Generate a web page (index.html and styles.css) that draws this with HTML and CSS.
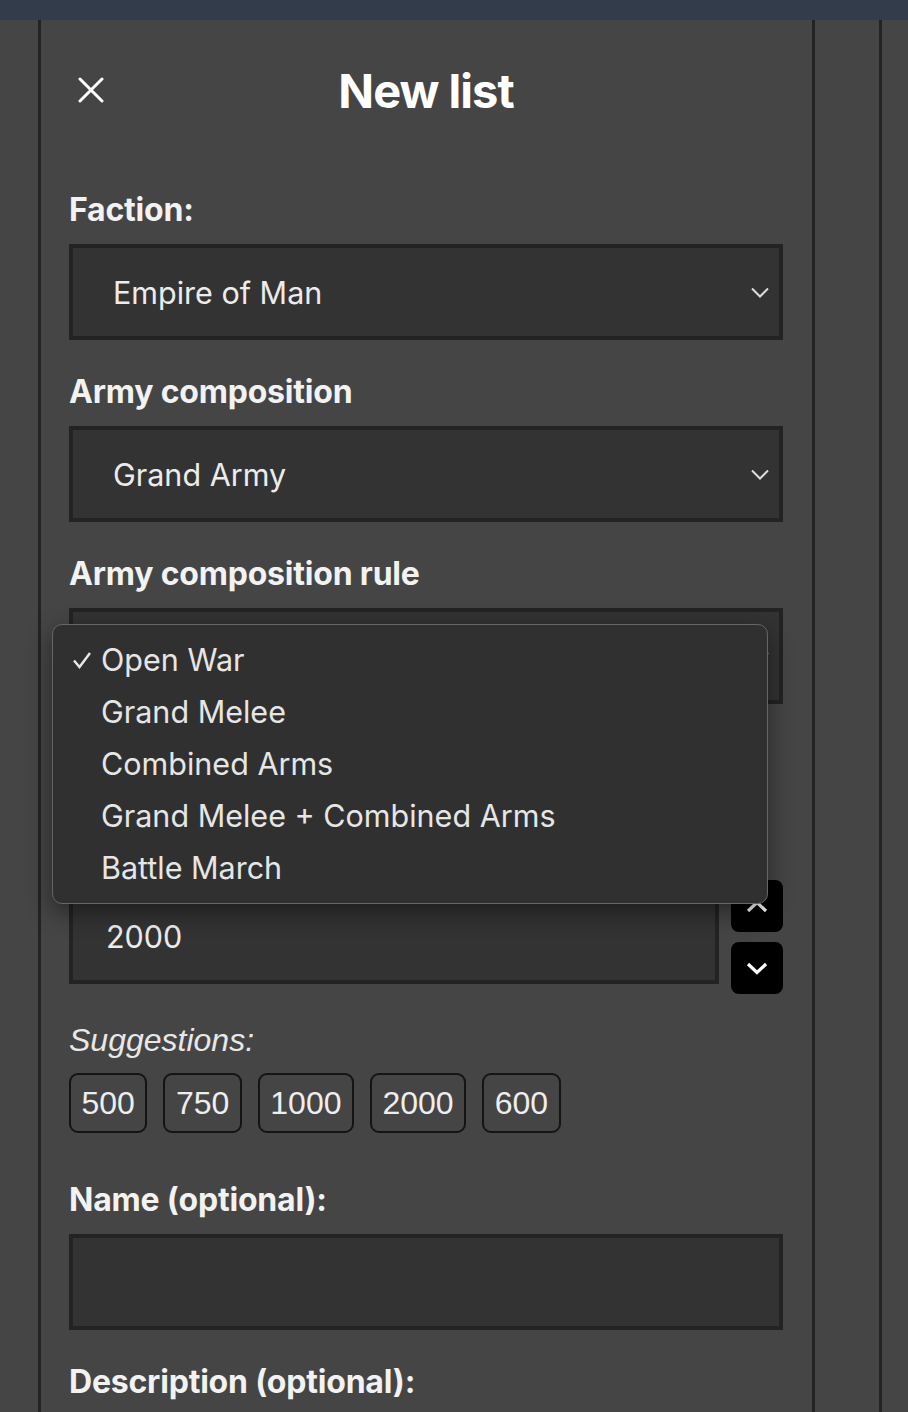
FILE: index.html
```html
<!DOCTYPE html>
<html>
<head>
    <title>New list</title>
    <link rel="stylesheet" href="styles.css">
</head>
<body>
    <div class="topbar"></div>
    <div class="layout">
        <div class="gutter"></div>
        <main class="panel">
            <div class="header">
                <button class="close-button" aria-label="Close">
                    <svg width="26" height="26" viewBox="0 0 26 26"><path d="M2 2 L24 24 M24 2 L2 24" stroke="#fff" stroke-width="3" stroke-linecap="round"/></svg>
                </button>
                <h1 class="title">New list</h1>
                <div></div>
            </div>

            <div class="field">
                <label class="label">Faction:</label>
                <div class="select">
                    <span>Empire of Man</span>
                    <svg class="chevron" width="18" height="11" viewBox="0 0 18 11"><path d="M1 1.5 L9 9.5 L17 1.5" fill="none" stroke="#ddd" stroke-width="2"/></svg>
                </div>
            </div>

            <div class="field">
                <label class="label">Army composition</label>
                <div class="select">
                    <span>Grand Army</span>
                    <svg class="chevron" width="18" height="11" viewBox="0 0 18 11"><path d="M1 1.5 L9 9.5 L17 1.5" fill="none" stroke="#ddd" stroke-width="2"/></svg>
                </div>
            </div>

            <div class="field">
                <label class="label">Army composition rule</label>
                <div class="select-wrap">
                    <div class="select">
                        <span>Open War</span>
                        <svg class="chevron" width="18" height="11" viewBox="0 0 18 11"><path d="M1 1.5 L9 9.5 L17 1.5" fill="none" stroke="#ddd" stroke-width="2"/></svg>
                    </div>
                    <ul class="dropdown">
                        <li class="option selected">
                            <svg class="check" width="20" height="18" viewBox="0 0 20 18"><path d="M2 9.5 L7.5 16 L18 2" fill="none" stroke="#e8e8e8" stroke-width="2.4"/></svg>
                            Open War
                        </li>
                        <li class="option">Grand Melee</li>
                        <li class="option">Combined Arms</li>
                        <li class="option">Grand Melee + Combined Arms</li>
                        <li class="option">Battle March</li>
                    </ul>
                </div>
            </div>

            <div class="field field-points">
                <label class="label">Points:</label>
                <div class="points-row">
                    <div class="input number-input">2000</div>
                    <div class="stepper">
                        <button class="step-button" aria-label="Increase">
                            <svg width="22" height="13" viewBox="0 0 22 13"><path d="M2 11 L11 2.5 L20 11" fill="none" stroke="#fff" stroke-width="3.2"/></svg>
                        </button>
                        <button class="step-button" aria-label="Decrease">
                            <svg width="22" height="13" viewBox="0 0 22 13"><path d="M2 2 L11 10.5 L20 2" fill="none" stroke="#fff" stroke-width="3.2"/></svg>
                        </button>
                    </div>
                </div>
                <p class="suggestions-label">Suggestions:</p>
                <div class="chips">
                    <button class="chip">500</button>
                    <button class="chip">750</button>
                    <button class="chip">1000</button>
                    <button class="chip">2000</button>
                    <button class="chip">600</button>
                </div>
            </div>

            <div class="field">
                <label class="label">Name (optional):</label>
                <div class="input"></div>
            </div>

            <div class="field">
                <label class="label">Description (optional):</label>
            </div>
        </main>
        <div class="side"></div>
    </div>
</body>
</html>
```
FILE: styles.css
```css
body {
    margin: 0;
    height: 1412px;
    overflow: hidden;
    background-color: #454545;
    font-family: Inter, "Noto Sans", sans-serif;
    color: #f0f0f0;
}

.topbar {
    height: 20px;
    background-color: #323c4b;
}

.layout {
    display: flex;
    height: 1392px;
}

.gutter {
    width: 38px;
}

.panel {
    width: 714px;
    padding: 0 29px 0 28px;
    border-left: 3px solid #232323;
    border-right: 3px solid #232323;
}

.side {
    width: 64px;
    border-right: 3px solid #232323;
}

.header {
    display: grid;
    grid-template-columns: 44px 1fr 44px;
    align-items: center;
    height: 140px;
}

.close-button {
    display: flex;
    align-items: center;
    justify-content: center;
    width: 44px;
    height: 44px;
    padding: 0;
    border: none;
    background: none;
}

.title {
    margin: 0;
    text-align: center;
    font-size: 47px;
    font-weight: 700;
    color: #fff;
    letter-spacing: -1px;
}

.field {
    margin-top: 32px;
}

.field + .field {
    margin-top: 34px;
}

.label {
    display: block;
    font-size: 32px;
    line-height: 36px;
    font-weight: 700;
    color: #f2f2f2;
    margin-bottom: 16px;
    letter-spacing: -0.2px;
}

.select,
.input {
    display: flex;
    align-items: center;
    justify-content: space-between;
    height: 96px;
    box-sizing: border-box;
    border: 4px solid #232323;
    background-color: #333;
    padding: 0 6px 0 40px;
    font-size: 30.5px;
    color: #ececec;
}

.chevron {
    margin-right: 4px;
}

.select-wrap {
    position: relative;
}

.dropdown {
    position: absolute;
    top: 16px;
    left: -17px;
    width: 716px;
    box-sizing: border-box;
    margin: 0;
    padding: 9px 0;
    list-style: none;
    background-color: #303030;
    border: 1px solid #666;
    border-radius: 10px;
    box-shadow: 0 8px 24px rgba(0, 0, 0, 0.45);
}

.option {
    position: relative;
    height: 52px;
    line-height: 52px;
    padding-left: 48px;
    font-size: 30.5px;
    color: #e6e6e6;
}

.check {
    position: absolute;
    left: 19px;
    top: 17px;
}

.field-points .label {
    margin-top: 122px;
}

.points-row {
    display: flex;
    align-items: center;
    gap: 12px;
}

.number-input {
    flex: 1;
    padding-left: 33px;
}

.stepper {
    display: flex;
    flex-direction: column;
    gap: 10px;
    padding-top: 2px;
}

.step-button {
    display: flex;
    align-items: center;
    justify-content: center;
    width: 52px;
    height: 52px;
    padding: 0;
    border: none;
    border-radius: 8px;
    background-color: #000;
}

.suggestions-label {
    margin: 28px 0 15px;
    font-family: "Liberation Sans", Arial, sans-serif;
    font-style: italic;
    font-size: 32px;
    line-height: 36px;
    color: #e8e8e8;
}

.chips {
    display: flex;
    gap: 16px;
}

.chip {
    height: 60px;
    padding: 0 10.5px;
    border: 2px solid #141414;
    border-radius: 9px;
    background: none;
    font-family: "Liberation Sans", Arial, sans-serif;
    font-size: 32px;
    color: #eee;
}

.field-points + .field {
    margin-top: 49px;
}
```
